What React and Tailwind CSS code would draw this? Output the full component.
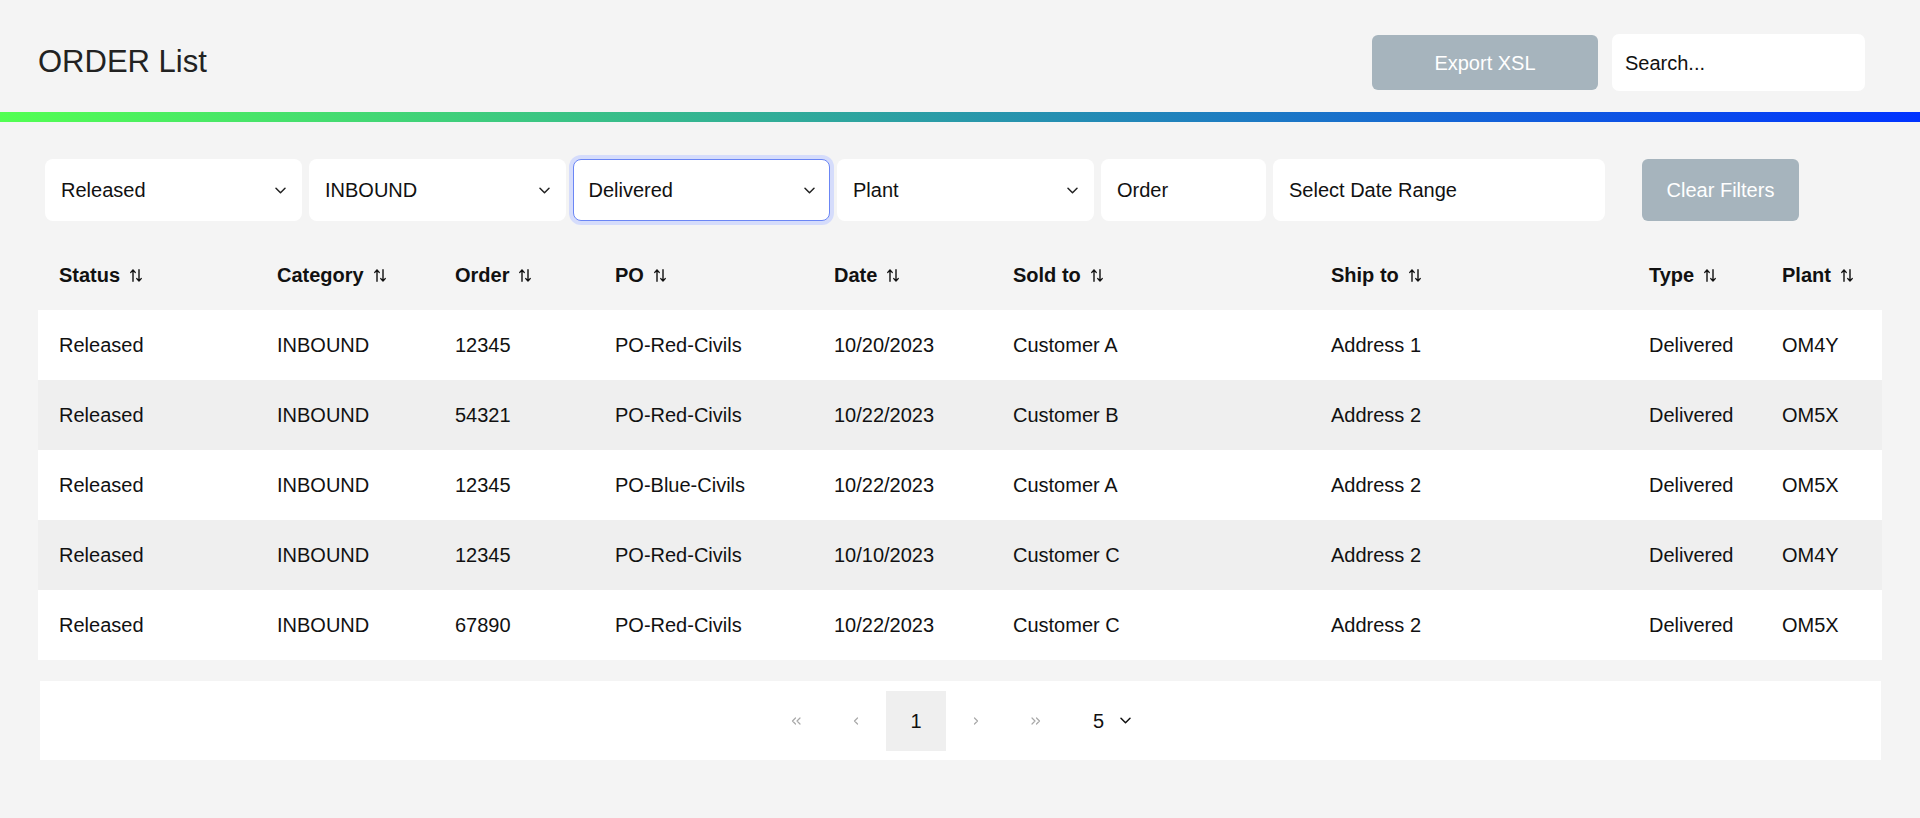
import React from 'react'

const rows = [
    ['Released', 'INBOUND', '12345', 'PO-Red-Civils', '10/20/2023', 'Customer A', 'Address 1', 'Delivered', 'OM4Y'],
    ['Released', 'INBOUND', '54321', 'PO-Red-Civils', '10/22/2023', 'Customer B', 'Address 2', 'Delivered', 'OM5X'],
    ['Released', 'INBOUND', '12345', 'PO-Blue-Civils', '10/22/2023', 'Customer A', 'Address 2', 'Delivered', 'OM5X'],
    ['Released', 'INBOUND', '12345', 'PO-Red-Civils', '10/10/2023', 'Customer C', 'Address 2', 'Delivered', 'OM4Y'],
    ['Released', 'INBOUND', '67890', 'PO-Red-Civils', '10/22/2023', 'Customer C', 'Address 2', 'Delivered', 'OM5X'],
]

const columns = [
    { label: 'Status', w: 'w-[218px]' },
    { label: 'Category', w: 'w-[178px]' },
    { label: 'Order', w: 'w-[160px]' },
    { label: 'PO', w: 'w-[219px]' },
    { label: 'Date', w: 'w-[179px]' },
    { label: 'Sold to', w: 'w-[318px]' },
    { label: 'Ship to', w: 'w-[318px]' },
    { label: 'Type', w: 'w-[133px]' },
    { label: 'Plant', w: 'w-[121px]' },
]

function SortIcon() {
    return (
        <svg width="12" height="13" viewBox="0 0 12 13" fill="none" stroke="#111" strokeWidth="1.4" strokeLinecap="round" strokeLinejoin="round">
            <path d="M3 12.2V1M0.8 3.4L3 1L5.2 3.4" />
            <path d="M9 0.8V12M6.8 9.6L9 12L11.2 9.6" />
        </svg>
    )
}

function Chevron({ color = '#222' }) {
    return (
        <svg width="11" height="7" viewBox="0 0 11 7" fill="none" stroke={color} strokeWidth="1.5" strokeLinecap="round" strokeLinejoin="round">
            <path d="M1 1.2L5.5 5.7L10 1.2" />
        </svg>
    )
}

function Select({ value, focused }) {
    return (
        <div className={`w-[257px] h-[62px] bg-white rounded-[8px] flex items-center justify-between text-[20px] text-[#111]
            ${focused ? 'border-[1.5px] border-[#6b86f5] ring-4 ring-[#d5dcfb] pl-[14.5px] pr-[14.5px]' : 'pl-[16px] pr-[16px]'}`}>
            <span>{value}</span>
            <Chevron />
        </div>
    )
}

function PageArrow({ d, w = 10 }) {
    return (
        <div className="w-[60px] h-[60px] flex items-center justify-center">
            <svg width={w} height="8" viewBox={`0 0 ${w} 8`} fill="none" stroke="#a8a8a8" strokeWidth="1.2" strokeLinecap="round" strokeLinejoin="round">
                <path d={d} />
            </svg>
        </div>
    )
}

export default function App() {
    return (
        <div className="min-h-screen bg-[#f4f4f4] font-['Liberation_Sans',Arial,sans-serif] text-[#111]">

            <div className="flex items-center justify-between pl-[38px] pr-[55px] pt-[34px] pb-[21px]">
                <h1 className="text-[31px] text-[#222]">ORDER List</h1>
                <div className="flex items-center gap-[14px]">
                    <button className="w-[226px] h-[55px] rounded-[6px] bg-[#a6b4bd] text-white text-[20px]">Export XSL</button>
                    <div className="w-[253px] h-[57px] bg-white rounded-[7px] flex items-center pl-[13px] text-[20px] text-[#111]">Search...</div>
                </div>
            </div>

            <div className="h-[10px] bg-[linear-gradient(to_right,#52ff52,#0033ff)]"></div>

            <div className="flex items-center mt-[37px] pl-[45px]">
                <div className="flex items-center gap-[7px]">
                    <Select value="Released" />
                    <Select value="INBOUND" />
                    <Select value="Delivered" focused />
                    <Select value="Plant" />
                    <div className="w-[165px] h-[62px] bg-white rounded-[8px] flex items-center pl-[16px] text-[20px]">Order</div>
                    <div className="w-[332px] h-[62px] bg-white rounded-[8px] flex items-center pl-[16px] text-[20px]">Select Date Range</div>
                </div>
                <button className="ml-[37px] w-[157px] h-[62px] rounded-[6px] bg-[#a6b4bd] text-white text-[20px]">Clear Filters</button>
            </div>

            <table className="mt-[19px] ml-[38px] w-[1844px] table-fixed border-collapse text-[20px]">
                <thead>
                    <tr className="h-[70px]">
                        {columns.map(c => (
                            <th key={c.label} className={`${c.w} pl-[21px] text-left font-bold`}>
                                <span className="flex items-center gap-[10px]">
                                    {c.label}
                                    <SortIcon />
                                </span>
                            </th>
                        ))}
                    </tr>
                </thead>
                <tbody>
                    {rows.map((r, i) => (
                        <tr key={i} className={`h-[70px] ${i % 2 === 1 ? 'bg-[#efefef]' : 'bg-white'}`}>
                            {r.map((cell, j) => (
                                <td key={j} className="pl-[21px] whitespace-nowrap">{cell}</td>
                            ))}
                        </tr>
                    ))}
                </tbody>
            </table>

            <div className="mt-[21px] ml-[40px] w-[1841px] h-[79px] bg-white flex items-center justify-center">
                <PageArrow w={10} d="M4.5 1L1.5 4L4.5 7M9 1L6 4L9 7" />
                <PageArrow w={6} d="M4.5 1L1.5 4L4.5 7" />
                <div className="w-[60px] h-[60px] bg-[#efefef] flex items-center justify-center text-[20px]">1</div>
                <PageArrow w={6} d="M1.5 1L4.5 4L1.5 7" />
                <PageArrow w={10} d="M1 1L4 4L1 7M5.5 1L8.5 4L5.5 7" />
                <div className="w-[89px] h-[60px] flex items-center gap-[16px] pl-[27px] text-[20px]">
                    <span>5</span>
                    <Chevron color="#111" />
                </div>
            </div>

        </div>
    )
}
